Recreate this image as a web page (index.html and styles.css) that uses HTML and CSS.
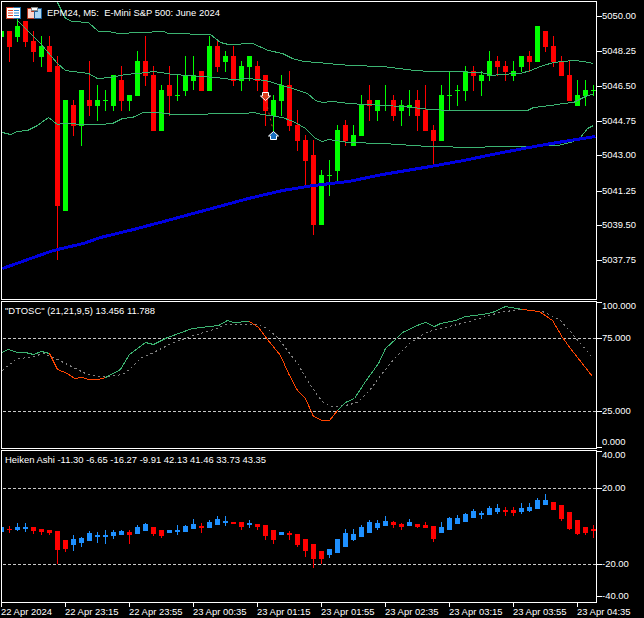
FILE: index.html
```html
<!DOCTYPE html>
<html lang="en">
<head>
  <meta charset="UTF-8" />
  <title>EPM24, M5</title>
  <link rel="stylesheet" href="styles.css">
</head>
<body>
  <div class="terminal">
    <div class="pane pane-main">
      <div class="plot">
        <svg id="mainChart" class="chart" viewBox="2 2 594 297"></svg>
        <div class="legend legend-main">
          <svg class="legend-icon" viewBox="0 0 15 12">
            <rect x="0.5" y="0.5" width="14" height="11" fill="#fff" stroke="#1f6fa8"/>
            <path d="M7.5 .5H.5V11.5H7.5" fill="#fff" stroke="#c8381f"/>
            <path d="M2 3.5H7M2 6H7M2 8.5H7" stroke="#e0452a"/>
            <path d="M8 3.5H13M8 6H13M8 8.5H13" stroke="#2b86cf"/>
          </svg>
          <svg class="legend-icon" viewBox="0 0 15 12">
            <path d="M.5 1.5H4.5V4.5H7.5V11.5H.5Z" fill="#fcd5cc" stroke="#b5341c"/>
            <path d="M14.5 1.5H10.5V4.5H7.5V11.5H14.5Z" fill="#a9d6f5" stroke="#1f5f96"/>
            <rect x="4.5" y="0.5" width="6" height="3" fill="#fff" stroke="#8a8a8a"/>
          </svg>
          <span class="legend-text">EPM24, M5:&nbsp; E-Mini S&amp;P 500: June 2024</span>
        </div>
      </div>
      <div id="mainScale" class="scale"></div>
    </div>

    <div class="pane pane-osc">
      <div class="plot">
        <svg id="oscChart" class="chart" viewBox="2 302 594 146"></svg>
        <div class="legend legend-sub">"DTOSC" (21,21,9,5) 13.456 11.788</div>
      </div>
      <div id="oscScale" class="scale"></div>
    </div>

    <div class="pane pane-heiken">
      <div class="plot">
        <svg id="heikenChart" class="chart" viewBox="2 451 594 151"></svg>
        <div class="legend legend-sub">Heiken Ashi -11.30 -6.65 -16.27 -9.91 42.13 41.46 33.73 43.35</div>
      </div>
      <div id="heikenScale" class="scale"></div>
    </div>

    <div class="time-axis">
      <span class="time-label">22 Apr 2024</span>
      <span class="time-label">22 Apr 23:15</span>
      <span class="time-label">22 Apr 23:55</span>
      <span class="time-label">23 Apr 00:35</span>
      <span class="time-label">23 Apr 01:15</span>
      <span class="time-label">23 Apr 01:55</span>
      <span class="time-label">23 Apr 02:35</span>
      <span class="time-label">23 Apr 03:15</span>
      <span class="time-label">23 Apr 03:55</span>
      <span class="time-label">23 Apr 04:35</span>
    </div>
  </div>

  <script src="chart.js"></script>
</body>
</html>
```

FILE: styles.css
```css
html, body {
  margin: 0;
  height: 100%;
  overflow: hidden;
  background: #000;
}

body {
  font-family: "Liberation Sans", Arial, sans-serif;
  font-size: 9.45px;
  color: #fff;
}

.terminal {
  display: flex;
  flex-direction: column;
  gap: 1px;
  width: 644px;
  height: 618px;
  padding: 1px 0 0 1px;
  box-sizing: border-box;
}

.pane {
  display: flex;
  flex: none;
}

.pane-main {
  height: 299px;
}

.pane-osc {
  height: 148px;
}

.pane-heiken {
  height: 153px;
}

.plot {
  position: relative;
  width: 596px;
  box-sizing: border-box;
  border: 1px solid #fff;
}

.chart {
  display: block;
  width: 594px;
  height: 100%;
}

.legend {
  position: absolute;
  left: 3px;
  top: 3px;
  line-height: 11px;
  white-space: nowrap;
}

.legend-main {
  display: flex;
  align-items: center;
  gap: 6px;
  left: 4px;
  top: 5px;
}

.legend-icon {
  width: 15px;
  height: 12px;
}

.legend-text {
  margin: -2px 0 0 -1px;
}

.scale {
  position: relative;
  flex: 1;
}

.tick {
  position: absolute;
  left: 0;
  width: 5px;
  height: 1px;
  background: #fff;
}

.scale-label {
  position: absolute;
  left: 5px;
  line-height: 11px;
  white-space: nowrap;
}

.time-axis {
  display: flex;
  margin-top: -1px;
}

.time-label {
  flex: none;
  width: 64px;
  height: 15px;
  box-sizing: border-box;
  padding-top: 3px;
  line-height: 11px;
  white-space: nowrap;
  background: linear-gradient(#fff, #fff) 0 0 / 1px 4px no-repeat;
}
```

FILE: chart.js
```js
const NS = 'http://www.w3.org/2000/svg';

// [colour, bodyTop, bodyBottom, wickTop, wickBottom], one bar every 8px
const priceBars = [
  ['g',31,37,31,37],['r',31,47,31,62],['g',26,37,19,42],['r',21,42,21,47],['r',41,52,31,62],
  ['g',46,57,36,67],['r',46,72,36,72],['r',66,206,56,260],['g',100,211,100,211],['r',105,126,100,136],
  ['g',90,126,90,146],['r',100,106,61,116],['g',100,106,85,121],['g',100,101,90,111],['g',75,106,75,111],
  ['r',80,101,66,111],['g',95,101,95,111],['g',61,96,51,96],['r',61,76,36,86],['r',75,131,66,131],
  ['g',90,131,85,131],['r',85,96,66,116],['g',95,96,74,101],['g',75,91,56,96],['g',75,81,56,90],
  ['r',71,91,71,91],['g',46,91,36,91],['r',46,67,41,72],['g',56,62,51,72],['r',56,81,46,86],
  ['g',66,81,61,91],['g',56,67,56,81],['r',66,81,61,91],['r',75,111,75,126],['g',100,116,95,133],
  ['g',85,101,75,116],['r',85,126,71,131],['r',125,141,110,151],['r',140,161,135,186],['r',155,225,140,235],
  ['g',175,225,170,225],['g',175,176,160,196],['g',130,171,125,181],['r',125,141,120,146],['g',135,146,125,146],
  ['g',105,136,95,136],['r',100,106,85,121],['g',100,111,100,121],['g',105,106,85,111],['r',100,116,95,121],
  ['g',105,111,100,126],['g',105,107,90,116],['r',100,116,90,131],['r',110,131,85,131],['r',130,141,125,165],
  ['g',95,141,85,141],['g',95,96,71,111],['g',90,91,85,106],['g',71,91,66,101],['r',71,76,66,91],
  ['g',75,81,71,96],['g',61,76,51,81],['r',61,67,56,76],['r',66,72,61,81],['g',71,76,61,81],
  ['g',56,67,56,72],['r',56,62,51,72],['g',26,62,26,62],['r',31,47,31,52],['r',46,62,36,67],
  ['r',61,76,56,76],['r',75,101,61,101],['g',95,106,80,106],['g',90,96,80,106],['g',90,91,85,96]
];

const heikenBars = [
  ['b',527,532,527,532],['r',529,530,526,533],['b',527,530,523,531],['b',527,529,523,532],['r',527,531,527,534],
  ['r',529,532,529,535],['r',530,533,530,535],['r',531,550,531,564],['r',540,549,540,552],['b',539,545,535,551],
  ['b',538,543,537,547],['b',533,541,531,541],['b',535,537,532,543],['b',535,537,530,544],['b',532,536,530,539],
  ['b',531,535,530,535],['r',532,535,530,544],['b',527,534,525,534],['b',524,531,523,531],['r',527,534,527,536],
  ['r',530,536,530,538],['b',530,533,530,533],['b',530,532,525,535],['b',526,532,525,532],['b',524,529,519,529],
  ['r',526,528,523,533],['b',522,528,520,528],['b',519,525,516,525],['b',521,523,516,526],['r',522,524,522,524],
  ['r',522,527,522,530],['b',523,525,520,528],['r',524,527,524,530],['r',525,536,525,540],['r',530,540,530,544],
  ['b',532,535,532,535],['r',533,535,531,540],['r',534,545,534,547],['r',539,551,539,557],['r',544,559,544,568],
  ['r',551,559,551,564],['b',549,555,549,558],['b',539,553,539,553],['b',533,547,529,547],['b',534,540,529,541],
  ['b',527,537,525,537],['b',522,533,520,533],['b',523,528,520,530],['b',521,526,516,526],['r',522,525,521,528],
  ['r',524,527,523,530],['b',522,526,519,526],['r',524,527,524,528],['r',525,528,522,528],['r',526,539,526,542],
  ['b',527,533,522,533],['b',518,530,517,530],['b',518,524,515,524],['b',514,522,513,522],['b',511,518,509,518],
  ['b',513,515,511,519],['b',508,515,506,515],['b',508,512,504,514],['r',510,512,507,516],['r',510,513,507,516],
  ['b',508,512,503,514],['b',507,511,503,512],['b',500,509,498,509],['b',500,505,494,505],['r',502,510,502,510],
  ['r',505,519,505,521],['r',512,529,512,530],['r',520,534,520,535],['r',527,533,527,535],['r',529,531,525,538]
];

const barColors = { g: '#00ff00', r: '#ff0000', b: '#1e90ff' };

const upperBand = '57,2 65,18 72,21 88,22 98,31 108,31 118,33 140,32 163,31 168,33 210,34 215,38 220,42 228,44 237,44 245,43 252,43 268,50 282,53 292,58 303,61 318,62 327,63 350,65 382,66 398,68 415,70 430,71 453,71 480,72 493,75 498,74 520,73 530,70 540,66 553,62 573,60 583,61 593,63';
const middleBand = '17,20 40,43 57,63 65,70 72,71 88,73 97,78 110,77 125,74 147,72 153,71 173,74 215,77 232,79 248,78 265,80 282,85 295,89 307,93 315,100 322,102 332,101 348,103 365,104 402,106 430,109 450,110 477,110 527,110 533,107 550,105 563,103 573,102 587,95 593,94';
const lowerBand = '2,132 10,134 17,131 27,130 37,125 48,117 57,124 63,123 87,124 100,124 112,123 122,118 132,117 143,112 157,112 173,114 200,114 215,113 245,113 253,112 262,114 282,117 295,122 305,128 315,138 322,141 328,139 348,142 382,143 398,144 428,146 477,147 493,146 527,146 557,145 570,142 580,137 587,128 593,125';
const trendLine = '2,268 33,257 50,251 57,249 83,243 100,237 133,229 167,220 200,211 215,207 248,198 282,190 313,185 348,181 382,174 430,166 463,160 497,153 523,148 545,144 563,141 595,136';

const oscGreen = [
  '1,352 8,349 17,352 25,352 33,354 41,351 49,353',
  '105,377 120,369 129,354 145,342 153,344 167,337 192,328 218,325 227,320 233,322 249,321',
  '337,410 345,402 354,398 365,381 378,363 385,348 396,338 402,332 419,324 425,322 434,326 440,323 455,320 465,316 482,314 492,312 505,306 522,309'
];
const oscRed = [
  '49,353 57,369 67,373 74,378 82,377 88,379 98,379 105,377',
  '249,321 258,327 267,339 280,355 288,373 297,390 305,398 313,416 322,420 329,420 337,410',
  '522,309 539,311 552,320 562,337 570,348 592,376'
];
const oscSignal = '2,370 15,359 20,358 33,356 43,353 55,358 67,364 87,374 100,376 107,376 122,374 130,368 140,358 153,352 173,342 193,335 217,328 225,324 240,324 257,324 267,328 277,337 287,350 297,363 307,380 317,395 322,401 325,403 332,406 345,405 357,402 369,390 380,375 395,357 409,343 422,334 432,330 445,327 465,322 489,315 499,312 519,309 542,311 559,319 569,330 591,356';

// [tick y, label y, text] in page pixels
const mainScale = [[16,16,'5050.00'],[51,51,'5048.25'],[86,86,'5046.50'],[121,121,'5044.75'],[155,155,'5043.00'],[191,191,'5041.25'],[225,225,'5039.50'],[260,260,'5037.75']];
const oscScale = [[302,306,'100.000'],[338,338,'75.000'],[411,411,'25.000'],[447,442,'0.000']];
const heikenScale = [[451,455,'40.00'],[488,488,'20.00'],[564,564,'-20.00'],[596,596,'-40.00']];

function el(parent, tag, attrs) {
  const node = document.createElementNS(NS, tag);
  for (const key in attrs) node.setAttribute(key, attrs[key]);
  parent.appendChild(node);
  return node;
}

function drawBars(svg, bars) {
  bars.forEach((bar, i) => {
    const x = 8 * i;
    const fill = barColors[bar[0]];
    el(svg, 'rect', { x: x + 1, y: bar[3], width: 1, height: bar[4] - bar[3], fill, 'shape-rendering': 'crispEdges' });
    el(svg, 'rect', { x: x - 1, y: bar[1], width: 5, height: bar[2] - bar[1], fill, 'shape-rendering': 'crispEdges' });
  });
}

function drawLine(svg, points, stroke, width, dash) {
  const attrs = { points, stroke, fill: 'none', 'stroke-width': width, 'shape-rendering': 'crispEdges', transform: 'translate(.5 .5)' };
  if (dash) attrs['stroke-dasharray'] = dash;
  el(svg, 'polyline', attrs);
}

function drawLevel(svg, y) {
  drawLine(svg, '2,' + y + ' 596,' + y, '#c8c8c8', 1, '3 2');
}

function drawScale(id, rows, paneTop) {
  const scale = document.getElementById(id);
  rows.forEach(row => {
    const tick = document.createElement('i');
    tick.className = 'tick';
    tick.style.top = (row[0] - paneTop) + 'px';
    scale.appendChild(tick);

    const label = document.createElement('span');
    label.className = 'scale-label';
    label.style.top = (row[1] - paneTop - 6) + 'px';
    label.textContent = row[2];
    scale.appendChild(label);
  });
}

// main window
const main = document.getElementById('mainChart');
drawBars(main, priceBars);
drawLine(main, upperBand, '#3cb371', 1);
drawLine(main, middleBand, '#3cb371', 1);
drawLine(main, lowerBand, '#3cb371', 1);
drawLine(main, trendLine, '#0000e0', 3);
el(main, 'line', { x1: 266, y1: 101, x2: 273, y2: 130, stroke: '#c8401f', 'stroke-dasharray': '2 4' });
el(main, 'polygon', { points: '262.5,92.5 268.5,92.5 268.5,96 270.5,96 265.5,100.5 260.5,96 262.5,96', fill: '#d8401f', stroke: '#fff' });
el(main, 'polygon', { points: '273.5,131.5 278.5,136 276.5,136 276.5,139.5 270.5,139.5 270.5,136 268.5,136', fill: '#1a6fc0', stroke: '#fff' });

// oscillator window
const osc = document.getElementById('oscChart');
drawLevel(osc, 338);
drawLevel(osc, 411);
drawLine(osc, oscSignal, '#808080', 1, '2 3');
oscGreen.forEach(line => drawLine(osc, line, '#3cb371', 1));
oscRed.forEach(line => drawLine(osc, line, '#ff4500', 1));

// heiken ashi window
const heiken = document.getElementById('heikenChart');
drawLevel(heiken, 488);
drawLevel(heiken, 564);
drawBars(heiken, heikenBars);

drawScale('mainScale', mainScale, 1);
drawScale('oscScale', oscScale, 301);
drawScale('heikenScale', heikenScale, 450);
```
